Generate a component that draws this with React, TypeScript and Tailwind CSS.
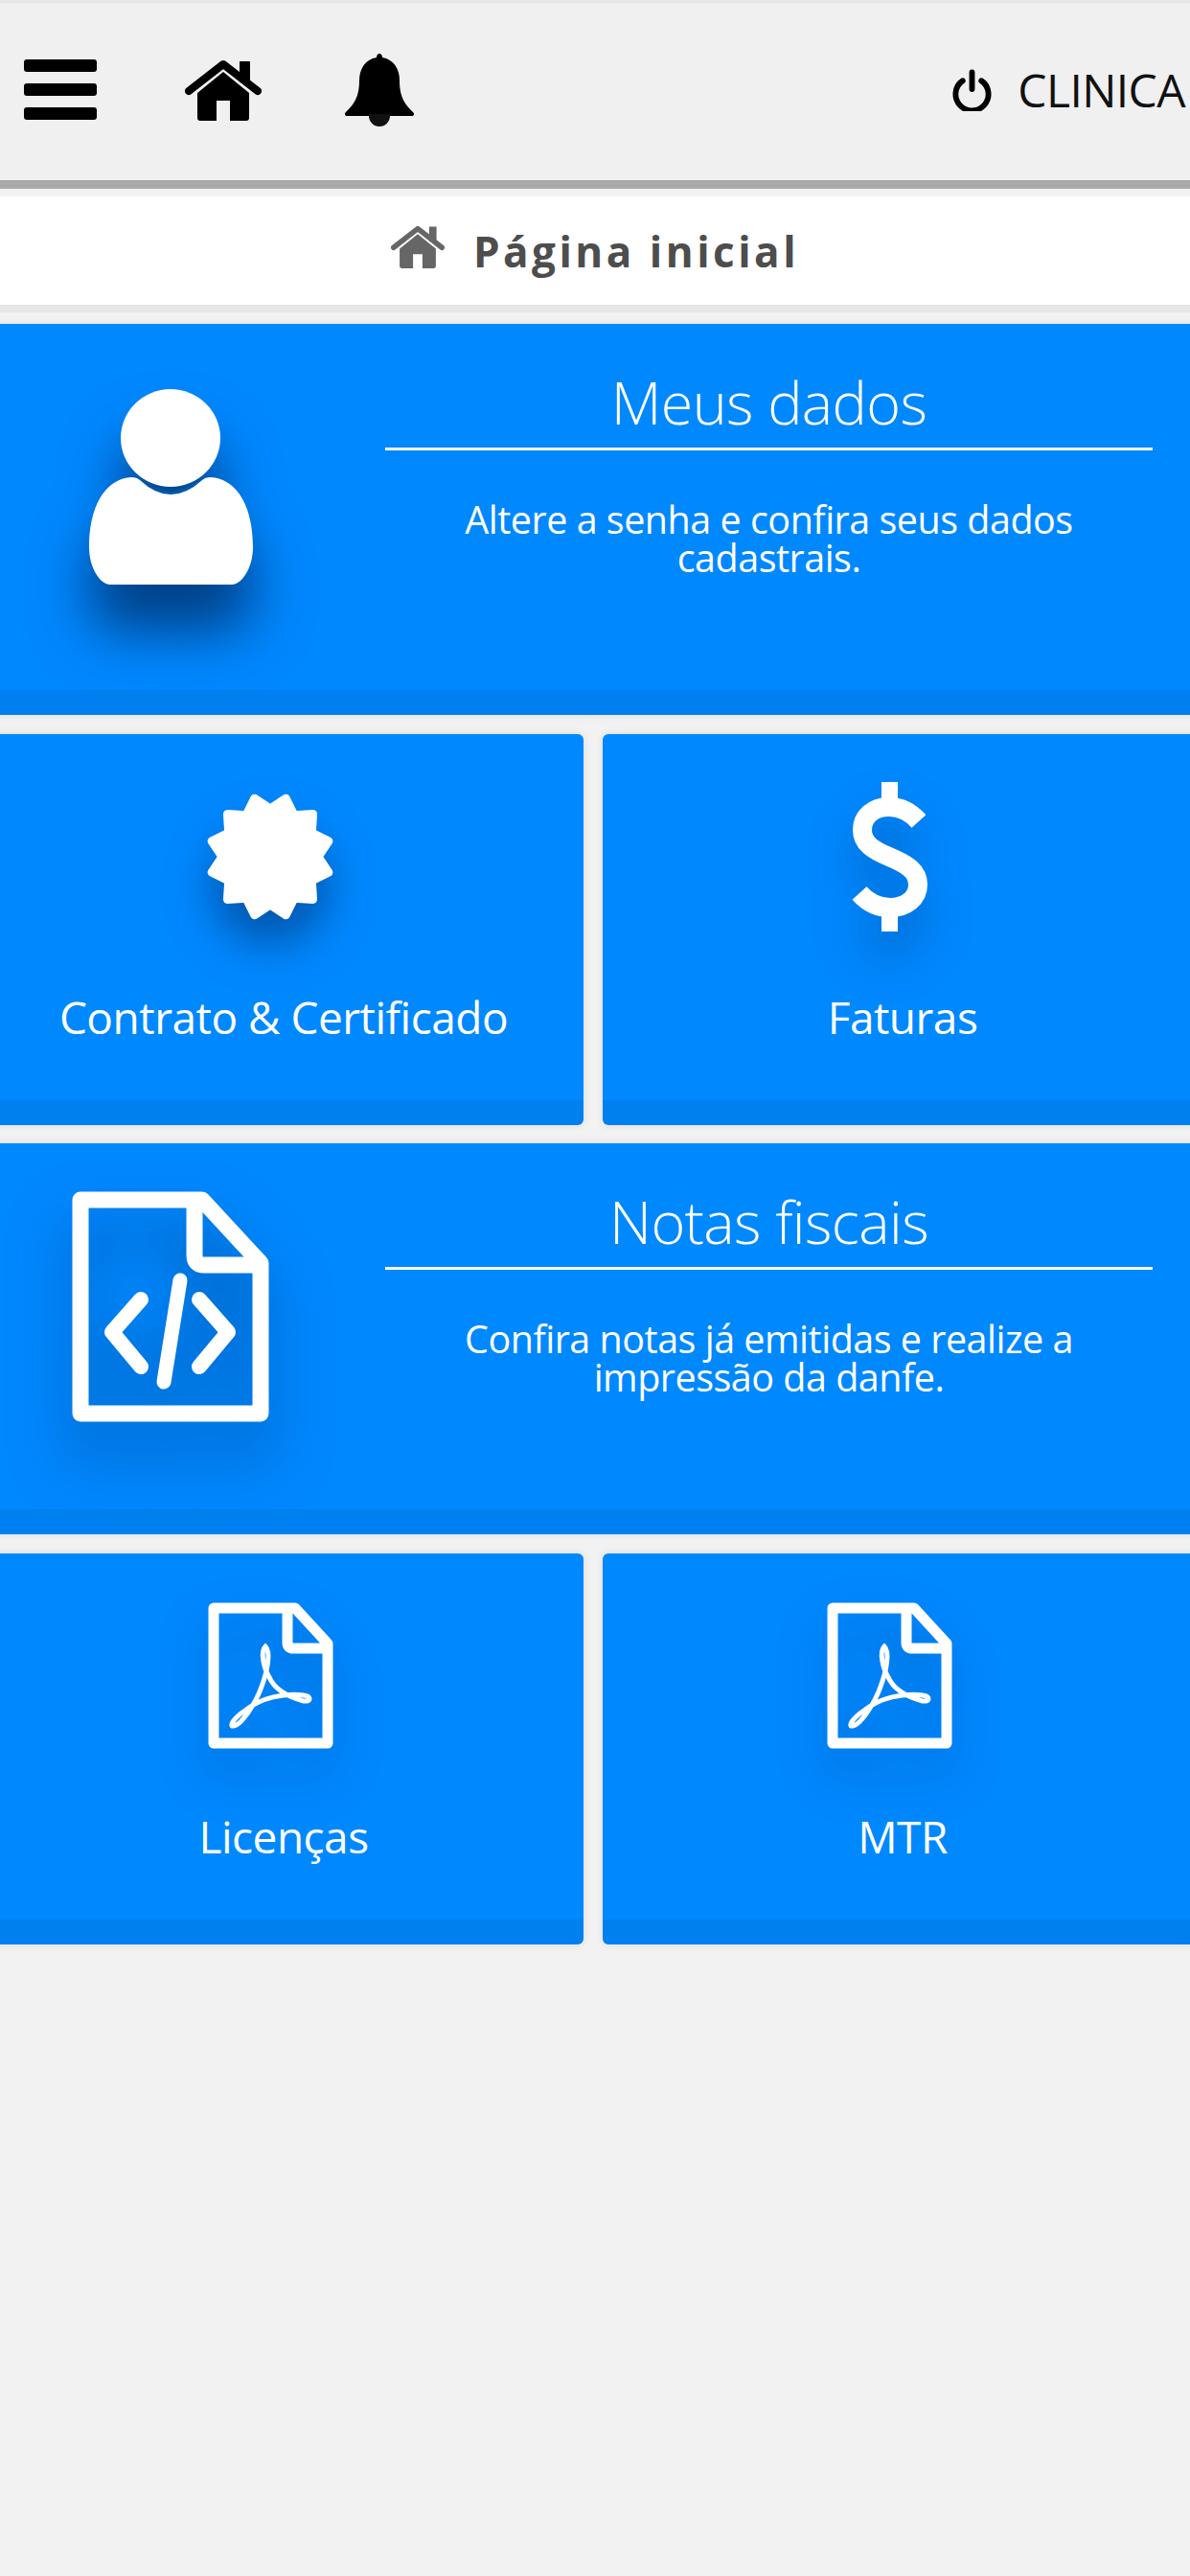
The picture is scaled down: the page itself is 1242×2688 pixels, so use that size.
import React from "react";

const starPoints = Array.from({ length: 24 }, (_, i) => {
  const a = ((15 + i * 15 - 90) * Math.PI) / 180;
  const r = i % 2 === 0 ? 63 : 50;
  return `${67 + r * Math.cos(a)},${67 + r * Math.sin(a)}`;
}).join(" ");

function HomeIcon({ className, fill }: { className: string; fill: string }) {
  return (
    <svg viewBox="0 0 80 64" className={className}>
      <path d="M57 2h11v22H57z" fill={fill} />
      <path d="M4 33 40 5l36 28" fill="none" stroke={fill} strokeWidth="8" strokeLinecap="round" strokeLinejoin="round" />
      <path d="M13 35 40 13l27 22v26a3 3 0 0 1-3 3H47V43H33v21H16a3 3 0 0 1-3-3Z" fill={fill} />
    </svg>
  );
}

function BellIcon() {
  return (
    <svg viewBox="0 0 72 76" className="w-[72px] h-[76px]">
      <path
        d="M36 0c2 0 3 2 3 4 12 2 18 12 18 24 0 18 6 25 14 33 2 2 1 4-2 4H3c-3 0-4-2-2-4 8-8 14-15 14-33C15 16 21 6 33 4c0-2 1-4 3-4Z"
        fill="#000"
      />
      <path d="M25 63h22v2a11 11 0 0 1-22 0Z" fill="#111" />
    </svg>
  );
}

function PowerIcon() {
  return (
    <svg viewBox="0 0 44 44" className="w-[43px] h-[44px]">
      <path d="M12 12a17.5 17.5 0 1 0 20 0" fill="none" stroke="#000" strokeWidth="6" strokeLinecap="round" />
      <path d="M22 3v18" fill="none" stroke="#000" strokeWidth="6" strokeLinecap="round" />
    </svg>
  );
}

function PersonIcon() {
  return (
    <svg viewBox="0 0 171 204" className="w-[171px] h-[204px] overflow-visible drop-shadow-[0_48px_30px_rgba(0,35,85,0.72)]">
      <path d="M52 97Q85 122 118 97" fill="none" stroke="#0058a6" strokeWidth="6" />
      <ellipse cx="85" cy="51" rx="52" ry="51" fill="#fff" />
      <path
        d="M44 92C15 94 0 125 0 165c0 22 12 39 22 39h127c10 0 22-17 22-39 0-40-15-71-44-73-4 0-7 1-9 3Q85 125 53 95c-2-2-5-3-9-3Z"
        fill="#fff"
      />
    </svg>
  );
}

function SealIcon() {
  return (
    <svg viewBox="0 0 134 134" className="w-[134px] h-[134px] overflow-visible drop-shadow-[0_30px_22px_rgba(0,40,95,0.5)]">
      <polygon points={starPoints} fill="#fff" stroke="#fff" strokeWidth="9" strokeLinejoin="round" />
    </svg>
  );
}

function DollarIcon() {
  return (
    <svg viewBox="0 0 81 156" className="w-[81px] h-[156px] overflow-visible drop-shadow-[0_30px_24px_rgba(0,40,95,0.35)]">
      <path d="M32 0h17v22H32zM32 134h17v22H32z" fill="#fff" />
      <path
        d="M71 41C62 31 52 26 40 26 22 26 12 37 12 50c0 14 11 21 28 28 19 8 30 15 30 29 0 14-12 24-29 24-13 0-24-6-32-15"
        fill="none"
        stroke="#fff"
        strokeWidth="20"
      />
    </svg>
  );
}

function CodeFileIcon() {
  return (
    <svg viewBox="0 0 206 239" className="w-[206px] h-[239px] overflow-visible drop-shadow-[0_36px_30px_rgba(0,40,95,0.5)]">
      <path d="M9 8h127l61 66v157H9Z" fill="none" stroke="#fff" strokeWidth="17" strokeLinejoin="round" />
      <path d="M128 8v58q0 10 10 10h59" fill="none" stroke="#fff" strokeWidth="17" strokeLinejoin="round" />
      <path d="M72 112 42 146l30 36M133 112l30 34-30 36" fill="none" stroke="#fff" strokeWidth="16" strokeLinecap="round" strokeLinejoin="round" />
      <path d="M113 92 96 198" fill="none" stroke="#fff" strokeWidth="15" strokeLinecap="round" />
    </svg>
  );
}

function PdfIcon() {
  return (
    <svg viewBox="0 0 131 153" className="w-[131px] h-[153px] overflow-visible drop-shadow-[0_26px_24px_rgba(0,40,95,0.32)]">
      <path d="M6 6h85l34 37v104H6Z" fill="none" stroke="#fff" strokeWidth="11" strokeLinejoin="round" />
      <path d="M83 6v36q0 6 6 6h36" fill="none" stroke="#fff" strokeWidth="11" strokeLinejoin="round" />
      <path
        d="M60 46c-6 6-1 24 4 32 6 14 21 21 36 25 8 1 8-5 0-6-20-3-45 3-60 15-15 10-18 18-13 17 8-1 23-24 29-41 6-16 10-36 4-42Z"
        fill="none"
        stroke="#fff"
        strokeWidth="5"
      />
    </svg>
  );
}

function WideCard({ icon, title, lines }: { icon: React.ReactNode; title: string; lines: string[] }) {
  return (
    <div className="flex h-[408px] rounded-[6px] bg-[#0088ff] border-b-[26px] border-[#0080f0] text-white shadow-[0_0_8px_rgba(0,0,0,0.1)]">
      <div className="w-[390px] h-[340px] flex items-center justify-center shrink-0">{icon}</div>
      <div className="ml-[29px] w-[801px] pt-[33px] text-center">
        <div className="h-[99px] border-b-[3px] border-white text-[61px] leading-[98px] tracking-[-0.6px] font-light">{title}</div>
        <div className="mt-[52px] text-[39.5px] leading-[40px] tracking-[-0.5px]">
          {lines.map((l) => (
            <div key={l}>{l}</div>
          ))}
        </div>
      </div>
    </div>
  );
}

function SmallCard({ icon, label }: { icon: React.ReactNode; label: string }) {
  return (
    <div className="h-[408px] rounded-[6px] bg-[#0088ff] border-b-[26px] border-[#0080ee] text-white flex flex-col items-center shadow-[0_0_8px_rgba(0,0,0,0.1)]">
      <div className="mt-[48px] mr-[28px] h-[160px] flex items-center justify-center">{icon}</div>
      <div className="mt-[62px] text-[46px] leading-[50px] tracking-[-0.5px]">{label}</div>
    </div>
  );
}

export default function App() {
  return (
    <div className="min-h-[2688px] bg-[#f2f2f3] overflow-hidden font-['Open_Sans','Noto_Sans',sans-serif]">
      <header className="h-[197px] border-t-[3px] border-b-[9px] border-t-[#e6e6e6] border-b-[#a8a8a8] bg-[#f0f0f0] flex items-center justify-between pl-[25px] pr-[5px] pb-[4px]">
        <div className="flex items-center">
          <div className="flex flex-col gap-[12px] w-[76px]">
            <div className="h-[13px] rounded-[3px] bg-black" />
            <div className="h-[13px] rounded-[3px] bg-black" />
            <div className="h-[13px] rounded-[3px] bg-black" />
          </div>
          <div className="ml-[92px]">
            <HomeIcon className="w-[80px] h-[64px]" fill="#000" />
          </div>
          <div className="ml-[87px]">
            <BellIcon />
          </div>
        </div>
        <div className="flex items-center gap-[26px]">
          <PowerIcon />
          <span className="text-[48px] leading-[50px] text-[#111] tracking-[-0.6px]">CLINICA</span>
        </div>
      </header>
      <div className="mt-[8px] h-[121px] bg-white border-b-[8px] border-[#e6e6e6] flex items-center justify-center gap-[30px]">
        <HomeIcon className="w-[56px] h-[45px] -mt-[8px]" fill="#666" />
        <span className="text-[44px] leading-[50px] font-bold text-[#4d4d4d] tracking-[3.5px]">Página inicial</span>
      </div>
      <main className="mt-[12px] -ml-[17px] w-[1272px] flex flex-col gap-[19.5px]">
        <WideCard icon={<PersonIcon />} title="Meus dados" lines={["Altere a senha e confira seus dados", "cadastrais."]} />
        <div className="grid grid-cols-2 gap-[20px]">
          <SmallCard icon={<SealIcon />} label="Contrato & Certificado" />
          <SmallCard icon={<DollarIcon />} label="Faturas" />
        </div>
        <WideCard icon={<CodeFileIcon />} title="Notas fiscais" lines={["Confira notas já emitidas e realize a", "impressão da danfe."]} />
        <div className="grid grid-cols-2 gap-[20px]">
          <SmallCard icon={<PdfIcon />} label="Licenças" />
          <SmallCard icon={<PdfIcon />} label="MTR" />
        </div>
      </main>
    </div>
  );
}
